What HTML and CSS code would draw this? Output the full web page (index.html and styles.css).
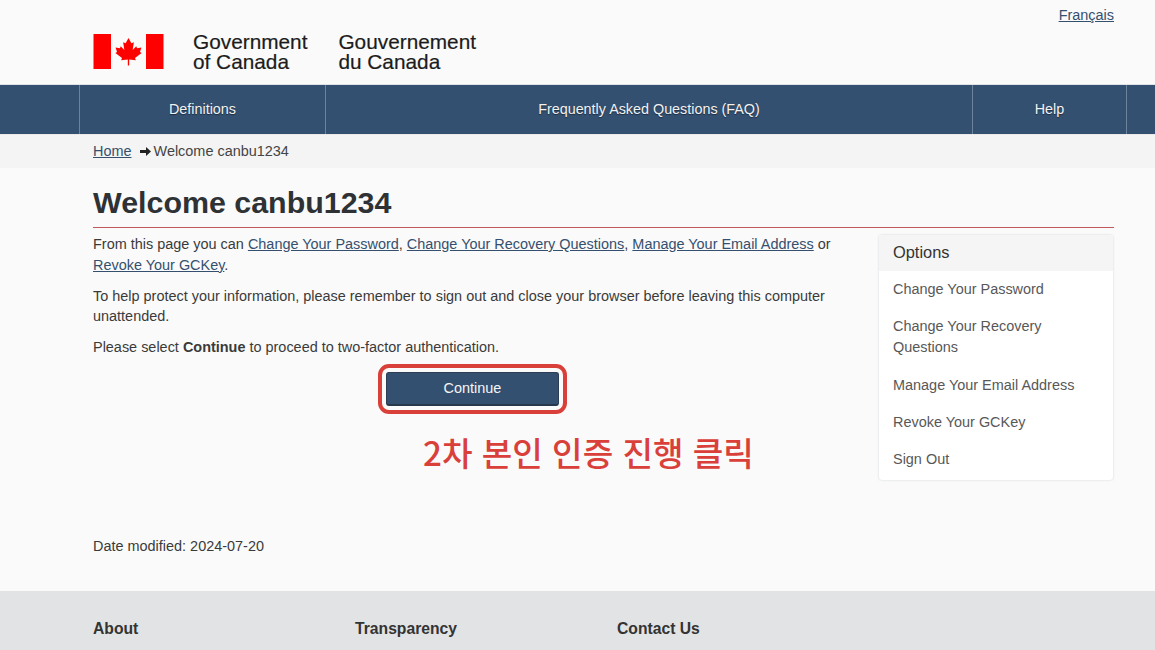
FILE: index.html
```html
<!DOCTYPE html>
<html lang="en">
<head>
    <meta charset="UTF-8">
    <title>Welcome canbu1234</title>
    <link rel="stylesheet" href="styles.css">
</head>
<body>
    <header>
        <div class="wrap top">
            <div class="brand">
                <svg class="flag" viewBox="0 0 72 36" width="71" height="35">
                    <rect x="0" y="0" width="18" height="36" fill="#f00"/>
                    <rect x="54" y="0" width="18" height="36" fill="#f00"/>
                    <path fill="#f00" d="M36 4l-3 5.500-2.500-1 1.200 8-3.700-3.800-.8 2-4.500-.8 1.500 4.600-1.700 1 6.800 5.200-.8 2.300 6.800-.8v6.300h1.400v-6.300l6.800.8-.8-2.300 6.800-5.200-1.700-1 1.500-4.600-4.500.8-.8-2-3.700 3.800 1.200-8-2.500 1z"/>
                </svg>
                <div class="sig sig-en">Government<br>of Canada</div>
                <div class="sig">Gouvernement<br>du Canada</div>
            </div>
            <a class="lang" href="#">Français</a>
        </div>
        <nav>
            <ul class="nav-links">
                <li class="nav-def"><a href="#">Definitions</a></li>
                <li class="nav-faq"><a href="#">Frequently Asked Questions (FAQ)</a></li>
                <li class="nav-help"><a href="#">Help</a></li>
            </ul>
        </nav>
        <div class="crumbs">
            <div class="wrap crumb-row">
                <a href="#">Home</a>
                <svg class="arrow" viewBox="0 0 11 9" width="11" height="9"><path fill="#222" d="M0 3h6V0l5 4.500-5 4.500V6H0z"/></svg>
                <span>Welcome canbu1234</span>
            </div>
        </div>
    </header>

    <main class="wrap">
        <h1>Welcome canbu1234</h1>
        <div class="columns">
            <section class="content">
                <p>From this page you can <a href="#">Change Your Password</a>, <a href="#">Change Your Recovery Questions</a>, <a href="#">Manage Your Email Address</a> or <a href="#">Revoke Your GCKey</a>.</p>
                <p>To help protect your information, please remember to sign out and close your browser before leaving this computer unattended.</p>
                <p class="lead">Please select <strong>Continue</strong> to proceed to two-factor authentication.</p>
                <div class="actions">
                    <div class="highlight">
                        <button type="button">Continue</button>
                    </div>
                </div>
                <div class="note" lang="ko">2차 본인 인증 진행 클릭</div>
            </section>
            <aside class="options">
                <h2>Options</h2>
                <a href="#">Change Your Password</a>
                <a href="#">Change Your Recovery Questions</a>
                <a href="#">Manage Your Email Address</a>
                <a href="#">Revoke Your GCKey</a>
                <a href="#">Sign Out</a>
            </aside>
        </div>
        <div class="modified">Date modified: 2024-07-20</div>
    </main>

    <footer>
        <div class="wrap footer-cols">
            <h3>About</h3>
            <h3>Transparency</h3>
            <h3>Contact Us</h3>
        </div>
    </footer>
</body>
</html>
```

FILE: styles.css
```css
html, body {
    height: 650px;
    overflow: hidden;
}

body {
    font-family: "Liberation Sans", Arial, sans-serif;
    font-size: 14.44px;
    line-height: 20.8px;
    margin: 0;
    padding: 0;
    background-color: #fafafa;
    color: #3a3a3a;
}

a {
    color: #35506e;
}

.wrap {
    width: 1021px;
    margin-left: 93px;
}

.top {
    height: 84px;
    display: flex;
    justify-content: space-between;
}

.brand {
    display: flex;
    padding-top: 32px;
}

.flag {
    margin-top: 2px;
    flex-shrink: 0;
}

.sig {
    font-size: 20.8px;
    line-height: 20.4px;
    color: #1c1c1c;
    -webkit-text-stroke: 0.2px #1c1c1c;
}

.sig-en {
    margin-left: 29px;
    margin-right: 31px;
}

.lang {
    margin-top: 5px;
    height: 21px;
}

nav {
    background-color: #345071;
    height: 50px;
    border-top: 1px solid #dfe3e8;
    box-sizing: border-box;
}

.nav-links {
    list-style: none;
    margin: 0 0 0 79px;
    padding: 0;
    display: flex;
    height: 100%;
}

.nav-links li {
    border-left: 1px solid #6d829b;
    box-sizing: border-box;
    display: flex;
    align-items: center;
    justify-content: center;
}

.nav-links .nav-def {
    width: 246px;
}

.nav-links .nav-faq {
    width: 647px;
}

.nav-links .nav-help {
    width: 155px;
    border-right: 1px solid #6d829b;
}

.nav-links a {
    font-size: 14.35px;
    color: #f2f2f2;
    text-decoration: none;
    text-shadow: 0 1px 1px #1b2c40;
}

.crumbs {
    background-color: #f4f4f4;
    height: 34px;
    padding-top: 6px;
    box-sizing: border-box;
    border-top: 1px solid #e9e9e9;
    color: #444;
}

.crumb-row {
    display: flex;
    align-items: center;
}

.arrow {
    margin: 0 3px 0 8px;
}

h1 {
    font-size: 30.4px;
    line-height: 38px;
    color: #2f3235;
    margin: 15px 0 0;
    padding-bottom: 6px;
    border-bottom: 1px solid #c0585c;
    height: 38px;
}

.columns {
    display: flex;
    justify-content: space-between;
    margin-top: 6px;
}

.content {
    width: 747px;
}

.content p {
    margin: 0 0 10px;
}

.content .lead {
    margin-bottom: 6px;
}

.actions {
    display: flex;
    margin-left: 285px;
}

.highlight {
    border: 4px solid #d9403a;
    border-radius: 11px;
    padding: 4px;
    width: 173px;
    height: 34px;
}

button {
    width: 100%;
    height: 100%;
    border: 1px solid #2b3e55;
    border-bottom: 2px solid #27384c;
    border-radius: 3px;
    background-color: #345071;
    color: #f5f5f5;
    font-family: inherit;
    font-size: 14.44px;
    padding: 0;
}

.note {
    font-family: "Noto Sans CJK KR", sans-serif;
    font-size: 33.2px;
    line-height: 40px;
    font-weight: 500;
    color: #d9403a;
    margin: 18px 0 0 330px;
    white-space: nowrap;
}

.options {
    width: 234px;
    height: 245px;
    background-color: #fff;
    border-radius: 3px;
    box-shadow: 0 0 2px rgba(90, 110, 130, 0.3);
    margin: 1px 1px 0 0;
}

.options h2 {
    font-size: 16.4px;
    font-weight: normal;
    line-height: 21px;
    margin: 0;
    padding: 7px 14px 8px;
    background-color: #f5f5f5;
    color: #333;
}

.options a {
    display: block;
    padding: 8px 14px;
    margin-bottom: 0.6px;
    color: #585858;
    text-decoration: none;
}

.modified {
    position: absolute;
    top: 536px;
    left: 93px;
}

footer {
    position: absolute;
    top: 591px;
    left: 0;
    right: 0;
    height: 59px;
    background-color: #e2e3e5;
}

.footer-cols {
    display: flex;
    padding-top: 28px;
}

h3 {
    font-size: 15.7px;
    line-height: 20px;
    margin: 0;
    width: 262px;
    color: #333;
}
```
